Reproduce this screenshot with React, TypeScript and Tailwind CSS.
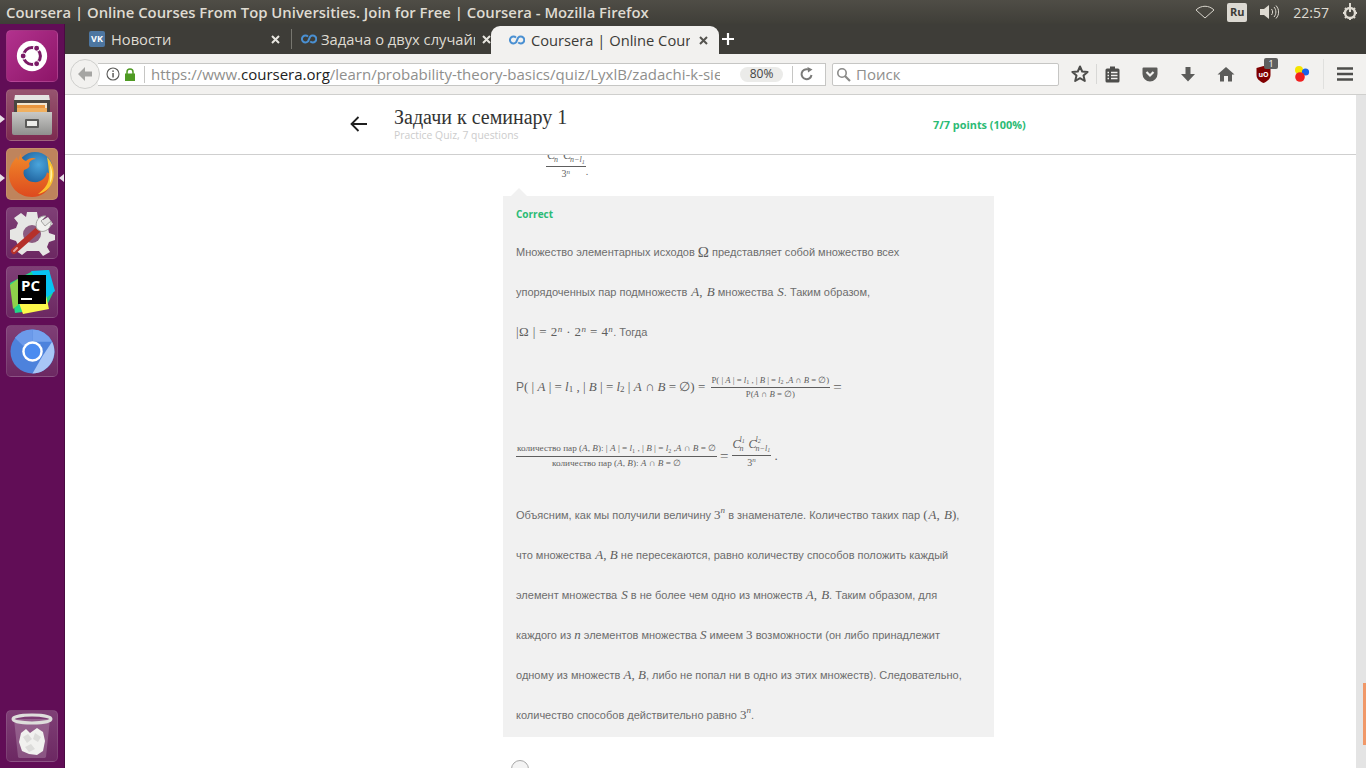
import type { ReactNode } from 'react';

const tileBase = 'relative flex size-[52px] shrink-0 items-center justify-center rounded-[5px] border border-white/10';
const tilePlain = 'bg-gradient-to-b from-[#7f3f76] to-[#6c2862]';

function Ubuntu() {
  return (
    <svg width="32" height="32" viewBox="0 0 38 38">
      <circle cx="19" cy="19" r="18" fill="#fff" />
      <circle cx="19" cy="19" r="10" fill="none" stroke="#7a1a66" strokeWidth="3.6" />
      <circle cx="8.5" cy="19" r="3.6" fill="#7a1a66" stroke="#fff" strokeWidth="1.4" />
      <circle cx="24.5" cy="9.8" r="3.6" fill="#7a1a66" stroke="#fff" strokeWidth="1.4" />
      <circle cx="24.5" cy="28.2" r="3.6" fill="#7a1a66" stroke="#fff" strokeWidth="1.4" />
    </svg>
  );
}

function Cabinet() {
  return (
    <svg width="40" height="40" viewBox="0 0 40 40">
      <defs>
        <linearGradient id="cab" x1="0" y1="0" x2="0" y2="1">
          <stop offset="0" stopColor="#c9c9c7" />
          <stop offset="1" stopColor="#8f8f8d" />
        </linearGradient>
      </defs>
      <path d="M3 0 H37 L38 6 H2 Z" fill="#e4e4e2" />
      <rect x="2" y="5" width="36" height="14" fill="#4a4642" />
      <path d="M5 8 H35 V16 H5 Z" fill="#f2e6cf" />
      <path d="M5 10 H33 V13 H5 Z" fill="#e9963f" />
      <path d="M5 13 H35 V17 H5 Z" fill="#f0b060" />
      <path d="M0 17 H40 V38 a2 2 0 0 1 -2 2 H2 a2 2 0 0 1 -2 -2 Z" fill="url(#cab)" />
      <rect x="13" y="24" width="14" height="9" rx="1" fill="#5a5a58" />
      <rect x="15" y="26" width="10" height="5" fill="#ecece9" />
    </svg>
  );
}

function Firefox() {
  return (
    <svg width="48" height="48" viewBox="0 0 48 48">
      <defs>
        <radialGradient id="globe" cx="0.6" cy="0.35" r="0.7">
          <stop offset="0" stopColor="#4aa5dc" />
          <stop offset="1" stopColor="#134f8c" />
        </radialGradient>
        <linearGradient id="fox" x1="0" y1="0" x2="0" y2="1">
          <stop offset="0" stopColor="#f28a2a" />
          <stop offset="1" stopColor="#dd4a1e" />
        </linearGradient>
      </defs>
      <circle cx="27" cy="20" r="18" fill="url(#globe)" />
      <path d="M13 3 C13 8 15 10 18 11 C21 8 25 7 28 9 C24 9 21 12 21 14 C23 17 19 19 16 20 C14 25 18 31 25 32 C33 33 38 28 39 22 C41 26 45 20 44 14 C48 24 44 47 24 47 C10 47 1 36 1 25 C1 15 7 9 9 7 C9 9 10 10 11 10 C11 7 12 5 13 3 Z" fill="url(#fox)" />
      <path d="M39 7 C45 13 47 22 45 30 C43 38 36 43 30 44 C37 39 41 33 41 26 C41 19 40 13 39 7 Z" fill="#fcc22e" />
      <path d="M42 15 C45 21 45 28 42 33 C42 27 43 21 42 15 Z" fill="#fff0a0" />
    </svg>
  );
}

function Tools() {
  return (
    <svg width="48" height="48" viewBox="0 0 48 48">
      <path d="M19 3 H29 L30 9 L35 11 L40 8 L45 15 L40 19 L41 24 L47 26 V31 L41 33 L39 38 L42 43 L35 47 L31 42 L19 42 L14 46 L7 41 L10 36 L8 32 L2 30 V21 L8 19 L10 14 L6 9 L13 4 L18 8 Z" fill="#e6e6e4" />
      <circle cx="24" cy="25" r="9" fill="#8b5a80" />
      <path d="M6 42 L32 19" stroke="#b5302a" strokeWidth="6" strokeLinecap="round" />
      <path d="M6 42 L9 39" stroke="#e8a09a" strokeWidth="2" strokeLinecap="round" />
      <path d="M29 20 C26 13 31 6 38 7 L33 12 L37 17 L43 12 C44 19 37 24 32 22 Z" fill="#f1f1ef" stroke="#a5a5a3" strokeWidth="1" />
    </svg>
  );
}

function PyCharm() {
  return (
    <svg width="46" height="46" viewBox="0 0 46 46">
      <path d="M1 14 L22 3 L40 1 L44 24 L36 40 L6 44 Z" fill="#21d789" />
      <path d="M22 2 L40 1 L46 22 L36 30 Z" fill="#07c3f2" />
      <path d="M10 34 L36 22 L40 40 L14 45 Z" fill="#fcf84a" />
      <path d="M1 16 L9 10 L9 36 L4 40 Z" fill="#8ed04a" />
      <rect x="9" y="6" width="28" height="29" fill="#000" />
      <text x="12" y="22" fill="#fff" fontFamily="'Open Sans', sans-serif" fontWeight="700" fontSize="15">PC</text>
      <rect x="12" y="29" width="11" height="2" fill="#fff" />
    </svg>
  );
}

function Chromium() {
  return (
    <svg width="45" height="45" viewBox="0 0 46 46">
      <circle cx="23" cy="23" r="22.5" fill="#4d82dc" />
      <path d="M23 0.5 A22.5 22.5 0 0 1 43 13 H23 Z" fill="#76a3ee" />
      <path d="M5 9 A22.5 22.5 0 0 1 23 0.5 V13 L14 18 Z" fill="#6c9aea" />
      <path d="M43 13 A22.5 22.5 0 0 1 23 45.5 L33 28 Z" fill="#a8c6f6" />
      <circle cx="23" cy="23" r="10.5" fill="#fff" />
      <circle cx="23" cy="23" r="8" fill="#4b8bf0" />
    </svg>
  );
}

function Trash() {
  return (
    <svg width="42" height="46" viewBox="0 0 42 46">
      <path d="M3 6 L7 44 a2 2 0 0 0 2 1 H33 a2 2 0 0 0 2 -1 L39 6 Z" fill="#ffffff" fillOpacity="0.2" />
      <path d="M10 20 L15 16 L19 20 L26 15 L32 19 L34 28 L32 38 L26 42 L18 41 L11 38 L8 29 Z" fill="#f1f1ef" />
      <path d="M12 24 L17 21 L21 26 L16 30 Z M24 20 L30 24 L27 29 L22 26 Z M14 34 L20 31 L24 36 L18 39 Z" fill="#dcdcda" />
      <ellipse cx="21" cy="6" rx="19" ry="4" fill="none" stroke="#dededc" strokeWidth="3" />
    </svg>
  );
}

function Launcher() {
  return (
    <aside className="relative flex w-[65px] shrink-0 flex-col gap-[7px] border-r border-[#4a0a42] bg-[#610d56] px-[6px] py-[6px]">
      <div className={`${tileBase} bg-gradient-to-br from-[#b2328e] to-[#8d1468]`}><Ubuntu /></div>
      <div className={`${tileBase} bg-gradient-to-b from-[#96546f] to-[#7d2a50]`}><Cabinet /></div>
      <div className={`${tileBase} bg-[#bf845c]`}><Firefox /></div>
      <div className={`${tileBase} ${tilePlain}`}><Tools /></div>
      <div className={`${tileBase} ${tilePlain}`}><PyCharm /></div>
      <div className={`${tileBase} ${tilePlain}`}><Chromium /></div>
      <div className={`${tileBase} ${tilePlain} mt-auto`}><Trash /></div>
      <span className="absolute left-0 top-[91px] h-0 w-0 border-y-[4px] border-l-[5px] border-y-transparent border-l-[#e8e0e6]" />
      <span className="absolute left-0 top-[150px] h-0 w-0 border-y-[4px] border-l-[5px] border-y-transparent border-l-[#e8e0e6]" />
      <span className="absolute right-0 top-[150px] h-0 w-0 border-y-[4px] border-r-[5px] border-y-transparent border-r-[#e8e0e6]" />
    </aside>
  );
}

function TopPanel() {
  return (
    <header className="flex h-[24px] shrink-0 items-center bg-gradient-to-b from-[#4f4d46] to-[#3f3e38] pl-[6px] pr-[8px] font-['Open_Sans',sans-serif] text-[14.85px] font-semibold text-[#dfdbd2]">
      <span className="min-w-0 flex-1 truncate">Coursera | Online Courses From Top Universities. Join for Free | Coursera - Mozilla Firefox</span>
      <svg width="20" height="14" viewBox="0 0 20 14" className="mr-[12px] shrink-0">
        <path d="M1 5 C6 0 14 0 19 5 L10 13 Z" fill="none" stroke="#d8d5cc" strokeWidth="1" />
      </svg>
      <span className="mr-[12px] flex h-[19px] w-[20px] shrink-0 items-center justify-center rounded-[2px] bg-[#dcd9d2] text-[11px] font-bold text-[#3c3b37]">Ru</span>
      <svg width="20" height="16" viewBox="0 0 20 16" className="mr-[14px] shrink-0">
        <path d="M1 5 H5 L10 1 V15 L5 11 H1 Z" fill="#dfdbd2" />
        <path d="M12.5 5 C14 7 14 9 12.5 11 M15 3 C17.5 6 17.5 10 15 13 M17 1.5 C20.5 5.5 20.5 10.5 17 14.5" fill="none" stroke="#dfdbd2" strokeWidth="1" />
      </svg>
      <span className="mr-[13px] shrink-0 text-[14px] font-normal">22:57</span>
      <svg width="16" height="18" viewBox="0 0 16 18" className="shrink-0">
        <circle cx="8" cy="10" r="5" fill="none" stroke="#dfdbd2" strokeWidth="2.4" />
        <path d="M8 0 V9" stroke="#dfdbd2" strokeWidth="2" />
        <path d="M1 10 H3 M13 10 H15 M8 15 V17 M3 5 L4 6 M13 5 L12 6 M3 15 L4 14 M13 15 L12 14" stroke="#dfdbd2" strokeWidth="2" />
      </svg>
    </header>
  );
}

function CourseraMark() {
  return (
    <svg width="16" height="10" viewBox="0 0 16 10" className="shrink-0">
      <path d="M7 2.6 A3.5 3.5 0 1 0 7 7.4 L9.2 2.6 A3.5 3.5 0 1 1 9.2 7.4" fill="none" stroke="#4a90d2" strokeWidth="2" />
    </svg>
  );
}

function CloseX({ dark }: { dark?: boolean }) {
  const c = dark ? '#55544f' : '#e8e6e0';
  return (
    <svg width="9" height="9" viewBox="0 0 9 9" className="shrink-0">
      <path d="M1 1 L8 8 M8 1 L1 8" stroke={c} strokeWidth="2" />
    </svg>
  );
}

function TabBar() {
  return (
    <div className="flex h-[30px] shrink-0 items-stretch bg-[#3e3d38] font-['Open_Sans',sans-serif] text-[14.7px] text-[#dfdbd2]">
      <div className="flex w-[226px] shrink-0 items-center pl-[24px] pr-[11px]">
        <span className="flex size-[16px] shrink-0 items-center justify-center rounded-[2px] bg-[#4d76a1] text-[9px] font-bold text-white">VK</span>
        <span className="ml-[6px] flex-1 truncate">Новости</span>
        <CloseX />
      </div>
      <div className="my-[5px] w-px shrink-0 bg-[#77766f]" />
      <div className="flex w-[199px] shrink-0 items-center pl-[9px]">
        <CourseraMark />
        <span className="ml-[4px] w-[155px] overflow-hidden whitespace-nowrap">Задача о двух случайных</span>
        <span className="ml-[7px]"><CloseX /></span>
      </div>
      <div className="relative mt-[2px] flex w-[228px] shrink-0 items-center rounded-t-[9px] bg-[#f2f1ef] pl-[18px] text-[#3c3b37]">
        <CourseraMark />
        <span className="ml-[6px] w-[159px] overflow-hidden whitespace-nowrap">Coursera | Online Courses</span>
        <span className="ml-[9px]"><CloseX dark /></span>
      </div>
      <svg width="14" height="14" viewBox="0 0 14 14" className="ml-[2px] shrink-0 self-center">
        <path d="M7 1 V13 M1 7 H13" stroke="#fff" strokeWidth="2.2" />
      </svg>
    </div>
  );
}

function ToolIcon({ children }: { children: ReactNode }) {
  return <div className="flex w-[38px] shrink-0 items-center justify-center">{children}</div>;
}

function NavBar() {
  return (
    <div className="relative flex h-[41px] shrink-0 items-center border-b border-[#cfcfcd] bg-[#f2f1ef] font-['Open_Sans',sans-serif] text-[15px]">
      {/* url bar */}
      <div className="ml-[5px] flex h-[30px] w-[756px] shrink-0 items-center">
        <div className="z-10 flex size-[30px] shrink-0 items-center justify-center rounded-full border border-[#cfcfcd] bg-[#f2f1ef]">
          <svg width="16" height="16" viewBox="0 0 16 16">
            <path d="M8 1 L1 8 L8 15 V10.5 H15 V5.5 H8 Z" fill="#a5a5a3" />
          </svg>
        </div>
        <div className="-ml-[2px] flex h-[23px] flex-1 items-center border-y border-r border-[#c6c6c4] bg-white">
          <svg width="14" height="14" viewBox="0 0 14 14" className="ml-[8px] shrink-0">
            <circle cx="7" cy="7" r="6" fill="none" stroke="#5a5a58" strokeWidth="1.1" />
            <rect x="6.3" y="6" width="1.5" height="4.5" fill="#5a5a58" />
            <rect x="6.3" y="3.4" width="1.5" height="1.5" fill="#5a5a58" />
          </svg>
          <svg width="12" height="13" viewBox="0 0 12 13" className="ml-[4px] shrink-0">
            <rect x="1" y="5.5" width="10" height="7.5" fill="#4f9a23" />
            <path d="M3 6 V4 a3 3 0 0 1 6 0 V6" fill="none" stroke="#4f9a23" strokeWidth="1.5" />
          </svg>
          <span className="ml-[8px] h-[17px] w-px shrink-0 bg-[#c6c6c4]" />
          <span className="ml-[6px] w-[569px] shrink-0 overflow-hidden whitespace-nowrap text-[#8f8f8d]">
            https://www.<span className="text-[#222]">coursera.org</span>/learn/probability-theory-basics/quiz/LyxlB/zadachi-k-sie
          </span>
          <span className="ml-[20px] flex h-[15px] w-[43px] shrink-0 items-center justify-center rounded-full bg-[#ebebe9] text-[12px] text-[#444]">80%</span>
          <span className="ml-[9px] h-[17px] w-px shrink-0 bg-[#c6c6c4]" />
          <svg width="14" height="14" viewBox="0 0 14 14" className="ml-[7px] shrink-0">
            <path d="M11.5 8 A5 5 0 1 1 8 2.4" fill="none" stroke="#7a7a78" strokeWidth="2" />
            <path d="M7.5 0 L12.5 2.5 L8 5.5 Z" fill="#7a7a78" />
          </svg>
        </div>
      </div>
      {/* search */}
      <div className="ml-[6px] flex h-[23px] w-[227px] shrink-0 items-center rounded-[2px] border border-[#c6c6c4] bg-white text-[#8f8f8d]">
        <svg width="15" height="15" viewBox="0 0 15 15" className="ml-[3px] shrink-0">
          <circle cx="6" cy="6" r="4.2" fill="none" stroke="#8a8a88" strokeWidth="1.6" />
          <path d="M9 9 L14 14" stroke="#8a8a88" strokeWidth="2.2" />
        </svg>
        <span className="ml-[5px]">Поиск</span>
      </div>
      {/* toolbar icons */}
      <div className="ml-[5px] flex items-center">
        <div className="flex w-[32px] shrink-0 items-center justify-center">
          <svg width="18" height="18" viewBox="0 0 18 18">
            <path d="M9 1.5 L11.2 6.5 L16.6 7 L12.5 10.6 L13.8 16 L9 13.2 L4.2 16 L5.5 10.6 L1.4 7 L6.8 6.5 Z" fill="none" stroke="#4d4d4b" strokeWidth="2" strokeLinejoin="round" />
          </svg>
        </div>
        <span className="h-[20px] w-px shrink-0 bg-[#d8d8d6]" />
        <div className="flex w-[30px] shrink-0 items-center justify-center">
          <svg width="15" height="17" viewBox="0 0 15 17">
            <rect x="0.5" y="2.5" width="14" height="14" rx="1.5" fill="#4d4d4b" />
            <rect x="5" y="0.5" width="5" height="3" fill="#4d4d4b" />
            <path d="M2.5 6.5 H4 M6 6.5 H12.5 M2.5 9.5 H4 M6 9.5 H12.5 M2.5 12.5 H4 M6 12.5 H12.5" stroke="#f2f1ef" strokeWidth="1.4" />
          </svg>
        </div>
        <div className="w-[4px] shrink-0" />
        <ToolIcon>
          <svg width="16" height="15" viewBox="0 0 16 15">
            <path d="M1.5 0.5 H14.5 A1 1 0 0 1 15.5 1.5 V7 A7.5 7.5 0 0 1 0.5 7 V1.5 A1 1 0 0 1 1.5 0.5 Z" fill="#5c5c5a" />
            <path d="M4.5 5 L8 8.5 L11.5 5" fill="none" stroke="#f2f1ef" strokeWidth="2.2" />
          </svg>
        </ToolIcon>
        <ToolIcon>
          <svg width="16" height="16" viewBox="0 0 16 16">
            <path d="M5.5 1 H10.5 V8 H15 L8 15.5 L1 8 H5.5 Z" fill="#5c5c5a" />
          </svg>
        </ToolIcon>
        <ToolIcon>
          <svg width="18" height="16" viewBox="0 0 18 16">
            <path d="M9 1 L17.5 8.5 H15 V15.5 H11 V10 H7 V15.5 H3 V8.5 H0.5 Z" fill="#5c5c5a" />
          </svg>
        </ToolIcon>
        <ToolIcon>
          <div className="relative size-[16px]">
            <svg width="15" height="17" viewBox="0 0 15 17" className="absolute left-0 top-0">
              <path d="M0.5 2 L7.5 0 L14.5 2 V9 C14.5 13 11 15.5 7.5 17 C4 15.5 0.5 13 0.5 9 Z" fill="#800000" />
              <text x="2.5" y="11" fill="#fff" fontSize="7" fontWeight="700" fontFamily="'Open Sans', sans-serif">uO</text>
            </svg>
            <span className="absolute -top-[8px] left-[8px] flex h-[11px] w-[14px] items-center justify-center rounded-[2px] bg-[#5f5f5f] text-[9px] leading-none text-white">1</span>
          </div>
        </ToolIcon>
        <ToolIcon>
          <svg width="16" height="18" viewBox="0 0 16 18">
            <circle cx="5" cy="5" r="4" fill="#f5e400" />
            <circle cx="11.5" cy="7" r="3.6" fill="#1a62e8" />
            <circle cx="6" cy="12" r="4.8" fill="#f02020" />
          </svg>
        </ToolIcon>
        <div className="w-[2px] shrink-0" />
        <span className="h-[30px] w-px shrink-0 bg-[#e0e0de]" />
        <div className="flex w-[42px] shrink-0 items-center justify-center">
          <svg width="16" height="14" viewBox="0 0 16 14">
            <path d="M0 1.5 H16 M0 7 H16 M0 12.5 H16" stroke="#4d4d4b" strokeWidth="2.4" />
          </svg>
        </div>
      </div>
    </div>
  );
}

function I({ children }: { children: ReactNode }) {
  return <span className="font-['Liberation_Serif',serif] text-[13px] italic text-[#5e5e5e]">{children}</span>;
}

// same as I with a hair more room on the left, where the reference's math sits wider
function Iw({ children }: { children: ReactNode }) {
  return <span className="ml-[1px] font-['Liberation_Serif',serif] text-[13px] italic text-[#5e5e5e]">{children}</span>;
}

function R({ children }: { children: ReactNode }) {
  return <span className="font-['Liberation_Serif',serif] text-[13px] text-[#5e5e5e]">{children}</span>;
}

function Up({ children }: { children: ReactNode }) {
  return <span className="relative -top-[4px] font-['Liberation_Serif',serif] text-[9px] italic text-[#5e5e5e]">{children}</span>;
}

function Dn({ children }: { children: ReactNode }) {
  return <span className="relative top-[3px] font-['Liberation_Serif',serif] text-[9px] text-[#5e5e5e]">{children}</span>;
}

function Frac({ top, bottom, className }: { top: ReactNode; bottom: ReactNode; className?: string }) {
  return (
    <span className={`inline-flex flex-col items-center align-middle font-['Liberation_Serif',serif] leading-none text-[#5e5e5e] ${className ?? ''}`}>
      <span className="whitespace-nowrap border-b border-[#5e5e5e] px-[1px] pb-[2px]">{top}</span>
      <span className="whitespace-nowrap pt-[2px]">{bottom}</span>
    </span>
  );
}

function TextLine({ children }: { children: ReactNode }) {
  return <p className="flex h-[40px] items-center whitespace-pre">{children}</p>;
}

function CnFrac() {
  return (
    <Frac
      className="text-[9px]"
      top={
        <span className="inline-flex items-center pt-[4px]">
          <i className="text-[12px]">C</i>
          <span className="relative -ml-[1px] inline-flex h-[18px] w-[9px] flex-col text-[8px] leading-[9px]">
            <i>l<sub className="text-[6px]">1</sub></i>
            <i>n</i>
          </span>
          <i className="text-[12px]">C</i>
          <span className="relative -ml-[1px] inline-flex h-[18px] flex-col text-[8px] leading-[9px]">
            <i>l<sub className="text-[6px]">2</sub></i>
            <i>n−l<sub className="text-[6px]">1</sub></i>
          </span>
        </span>
      }
      bottom={<span className="text-[10px]">3<sup className="text-[7px] italic">n</sup></span>}
    />
  );
}

function Callout() {
  return (
    <section className="relative mt-[8px] w-[491px] bg-[#f1f1f1] pb-[2px] pl-[13px] pt-[10px] font-['Liberation_Sans',sans-serif] text-[11px] text-[#6d6d6d]">
      <span className="absolute -top-[8px] left-[8px] h-0 w-0 border-x-[8px] border-b-[8px] border-x-transparent border-b-[#f1f1f1]" />
      <p className="h-[16px] font-['Open_Sans',sans-serif] text-[10px] font-bold leading-[16px] text-[#2bbb75]">Correct</p>
      <div className="mt-[10px]">
        <TextLine>Множество элементарных исходов <span className="font-['Liberation_Serif',serif] text-[15px] text-[#5e5e5e]">Ω</span> представляет собой множество всех</TextLine>
        <TextLine>упорядоченных пар подмножеств <Iw>A</Iw><R>, </R><Iw>B</Iw> множества <Iw>S</Iw>. Таким образом,</TextLine>
        <TextLine><span className="tracking-[0.4px]"><R>|Ω | = 2</R><Up>n</Up><R> · 2</R><Up>n</Up><R> = 4</R><Up>n</Up></span>. Тогда</TextLine>
        <p className="flex h-[70px] items-center whitespace-pre">
          <span className="text-[12px]">P</span><R>( | </R><I>A</I><R> | = </R><I>l</I><Dn>1</Dn><R> , | </R><I>B</I><R> | = </R><I>l</I><Dn>2</Dn><R> | </R><I>A</I><R> ∩ </R><I>B</I><R> = ∅) = </R>
          <Frac
            className="ml-[2px] text-[8.7px]"
            top={<>P( | <i>A</i> | = <i>l</i><sub className="text-[6px]">1</sub> , | <i>B</i> | = <i>l</i><sub className="text-[6px]">2</sub> ,<i>A</i> ∩ <i>B</i> = ∅)</>}
            bottom={<>P(<i>A</i> ∩ <i>B</i> = ∅)</>}
          />
          <span className="ml-[3px] font-['Liberation_Serif',serif] text-[15px] text-[#5e5e5e]">=</span>
        </p>
        <p className="flex h-[60px] items-center whitespace-pre pt-[8px]">
          <Frac
            className="text-[9.2px]"
            top={<>количество пар (<i>A</i>, <i>B</i>): | <i>A</i> | = <i>l</i><sub className="text-[6px]">1</sub> , | <i>B</i> | = <i>l</i><sub className="text-[6px]">2</sub> ,<i>A</i> ∩ <i>B</i> = ∅</>}
            bottom={<>количество пар (<i>A</i>, <i>B</i>): <i>A</i> ∩ <i>B</i> = ∅</>}
          />
          <span className="mx-[3px] font-['Liberation_Serif',serif] text-[15px] text-[#5e5e5e]">=</span>
          <span className="-mt-[14px]"><CnFrac /></span>
          <R> .</R>
        </p>
        <div className="mt-[13px]">
          <TextLine>Объясним, как мы получили величину <R>3</R><Up>n</Up> в знаменателе. Количество таких пар <R>(</R><Iw>A</Iw><R>, </R><Iw>B</Iw><R>)</R>,</TextLine>
          <TextLine>что множества <Iw>A</Iw><R>, </R><I>B</I> не пересекаются, равно количеству способов положить каждый</TextLine>
          <TextLine>элемент множества <Iw>S</Iw> в не более чем одно из множеств <I>A</I><R>, </R><Iw>B</Iw>. Таким образом, для</TextLine>
          <TextLine>каждого из <I>n</I> элементов множества <I>S</I> имеем <R>3</R> возможности (он либо принадлежит</TextLine>
          <TextLine>одному из множеств <I>A</I><R>,</R><I> B</I>, либо не попал ни в одно из этих множеств). Следовательно,</TextLine>
          <TextLine>количество способов действительно равно <R>3</R><Up>n</Up>.</TextLine>
        </div>
      </div>
    </section>
  );
}

function PageHeader() {
  return (
    <div className="z-10 flex h-[60px] shrink-0 items-center border-b border-[#cfcfcf] bg-white pb-[2px] pl-[285px]">
      <svg width="18" height="16" viewBox="0 0 18 16" className="shrink-0">
        <path d="M17 8 H2 M8.5 1 L1.5 8 L8.5 15" fill="none" stroke="#1f1f1f" strokeWidth="1.8" />
      </svg>
      <div className="ml-[26px] w-[539px]">
        <h1 className="font-['Liberation_Serif',serif] text-[20px] leading-[22px] text-[#333]">Задачи к семинару 1</h1>
        <p className="font-['Open_Sans',sans-serif] text-[10.4px] leading-[14px] text-[#cccccc]">Practice Quiz, 7 questions</p>
      </div>
      <span className="mt-[4px] font-['Open_Sans',sans-serif] text-[10.9px] font-bold text-[#2bbb75]">7/7 points (100%)</span>
    </div>
  );
}

function Scrollbar() {
  return (
    <div className="flex w-[10px] shrink-0 flex-col items-end bg-[#e4e4e4] pt-[588px]">
      <div className="h-[62px] w-[3px] bg-[#f09868]" />
    </div>
  );
}

export default function App() {
  return (
    <div className="flex h-[768px] w-[1366px] flex-col overflow-hidden bg-white">
      <TopPanel />
      <div className="flex min-h-0 flex-1">
        <Launcher />
        <div className="flex min-w-0 flex-1 flex-col">
          <TabBar />
          <NavBar />
          <div className="flex min-h-0 flex-1">
            <div className="flex min-w-0 flex-1 flex-col">
              <PageHeader />
              <main className="min-h-0 flex-1 overflow-hidden">
                <div className="flex h-[33px] items-end pb-[9px] pl-[481px]">
                  <span className="flex items-end">
                    <CnFrac />
                    <span className="font-['Liberation_Serif',serif] text-[10px] text-[#5e5e5e]">.</span>
                  </span>
                </div>
                <div className="pl-[438px]">
                  <Callout />
                  <div className="ml-[8px] mt-[23px] size-[18px] rounded-full border border-[#a8a8a8] bg-[#f4f4f4]" />
                </div>
              </main>
            </div>
            <Scrollbar />
          </div>
        </div>
      </div>
    </div>
  );
}
